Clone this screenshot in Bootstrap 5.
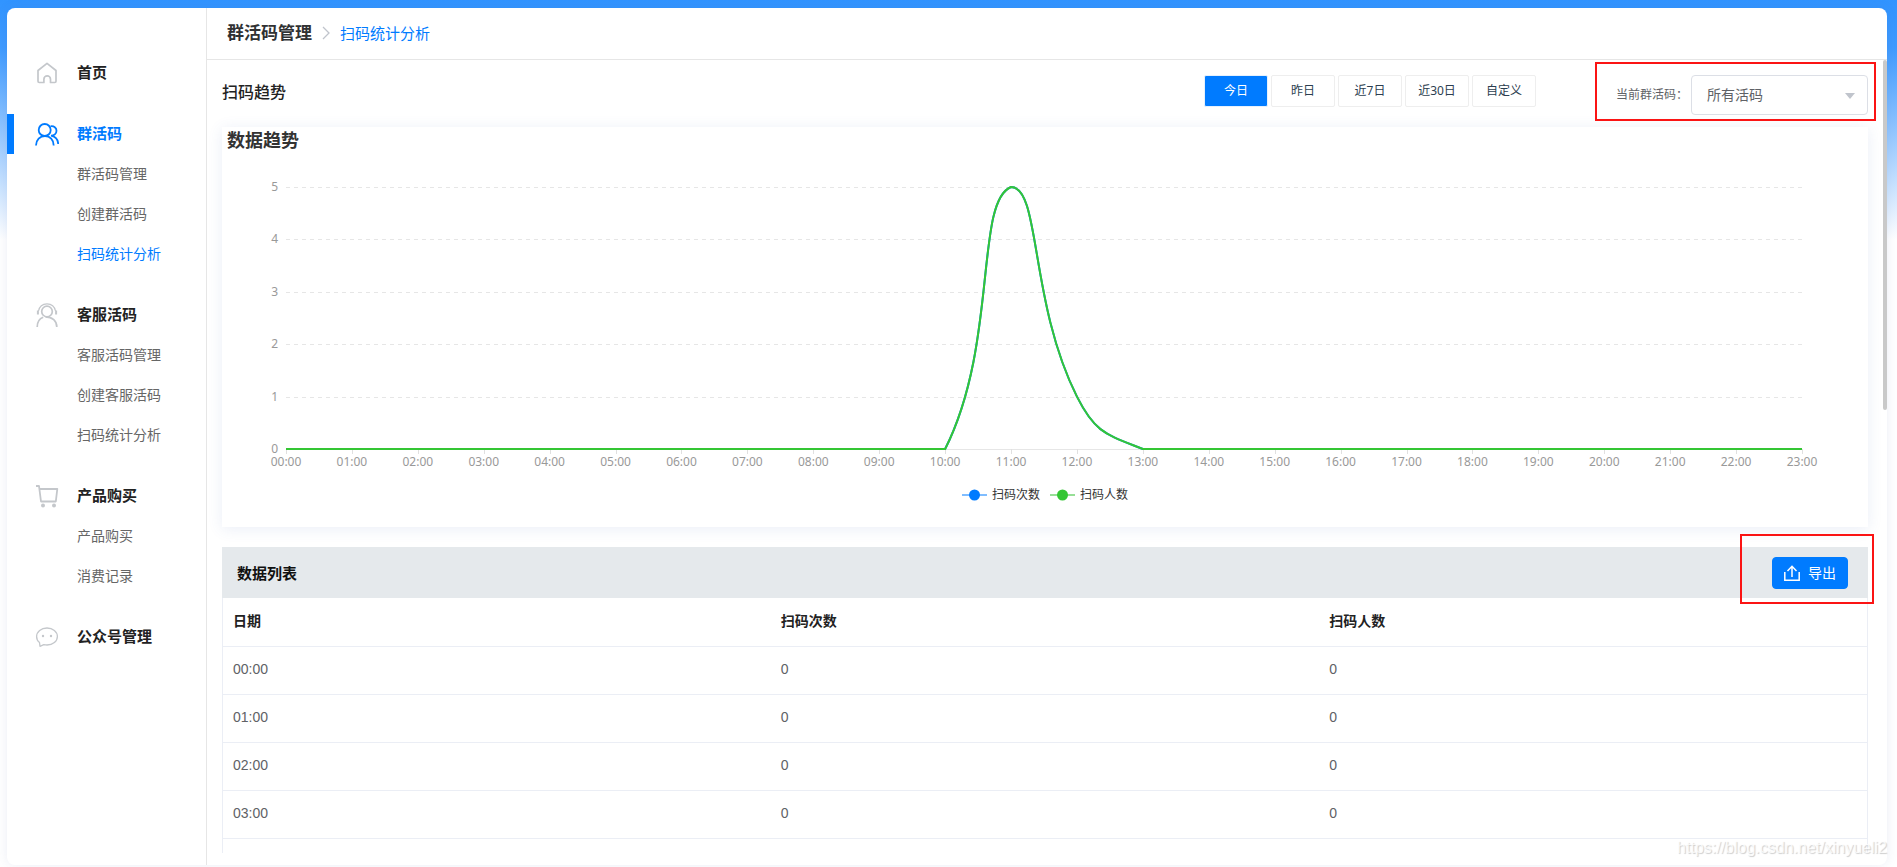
<!DOCTYPE html>
<html lang="zh-CN">
<head>
<meta charset="utf-8">
<meta name="viewport" content="width=device-width, initial-scale=1">
<title>扫码统计分析</title>
<link href="https://cdn.jsdelivr.net/npm/bootstrap@5.3.0/dist/css/bootstrap.min.css" rel="stylesheet">
<style>
  :root { --brand: #007bff; --line: #e6e6e6; --row-line: #ebeef5; }
  body {
    font-family: "Noto Sans", "Noto Sans CJK SC", sans-serif;
    font-size: 14px; line-height: 20px; color: #303133;
    background: linear-gradient(#3194ff 0, #3f9bff 48px, #fff 240px) no-repeat, #fff;
    background-size: 100% 240px;
    padding: 8px 10px 2px 7px;
  }
  a { text-decoration: none; }
  .shell { border-radius: 8px; box-shadow: 0 0 12px rgba(60, 80, 160, .1); }
  /* sidebar */
  .side { width: 200px; border-right: 1px solid var(--line); padding-top: 45px; }
  .side-group { margin-bottom: 21px; }
  .side-head { height: 40px; padding-left: 21px; border-left: 7px solid transparent; font-size: 15px; font-weight: 700; color: #222; }
  .side-head svg { width: 24px; height: 24px; margin-right: 18px; color: #c4c7cb; }
  .side-head span { padding-bottom: 2px; }
  .side-head.active { border-left-color: var(--brand); color: var(--brand); }
  .side-head.active svg { color: var(--brand); }
  .side-sub { height: 40px; padding-left: 70px; color: #666; }
  .side-sub.active { color: var(--brand); }
  /* top bar */
  .topbar { height: 52px; padding: 0 0 2px 20px; border-bottom: 1px solid var(--line); }
  .crumb-root { font-size: 17px; font-weight: 700; color: #303133; }
  .crumb-here { font-size: 15px; color: var(--brand); }
  /* scroll region */
  .scroller { overflow-y: auto; scrollbar-width: none; padding: 0 19px 0 15px; }
  .scroller::-webkit-scrollbar { display: none; }
  .thumb { position: absolute; right: 0; top: 0; width: 4px; border-radius: 2px; background: #c9c9c9; }
  .tools { padding-top: 15px; height: 67px; }
  .tools-title { font-size: 16px; line-height: 34px; font-weight: 500; color: #222; }
  .range { gap: 3px; margin-right: 80px; }
  .range .btn {
    --bs-btn-color: #2c3e50; --bs-btn-border-color: #eee; --bs-btn-bg: #fff;
    --bs-btn-active-bg: var(--brand); --bs-btn-active-color: #fff; --bs-btn-active-border-color: #e6f1fd;
    width: 64px; height: 32px; padding: 0; font-size: 12px; border-radius: 2px;
  }
  .picker label { font-size: 12px; color: #606266; width: 75px; }
  .picker select {
    width: 177px; height: 40px; padding: 0 15px; font-size: 14px; color: #606266; appearance: none;
    border-radius: 4px; border: 1px solid #dcdfe6; background: #fff;
  }
  .picker .arrow { position: absolute; right: 13px; top: 18px; pointer-events: none; border: 5px solid transparent; border-top: 6px solid #c0c4cc; border-bottom: 0; }
  .callout { position: absolute; border: 2px solid #fb1414; pointer-events: none; }
  .callout-picker { inset: -13px -8px -6px -21px; }
  .callout-export { inset: -23px -26px -15px -32px; }
  .trend { height: 400px; box-shadow: 0 2px 14px rgba(60, 100, 180, .11); margin-bottom: 20px; }
  .trend h2 { font-size: 18px; line-height: 26px; font-weight: 700; color: #333; margin: 0; padding-left: 5px; }
  .plot { height: 334px; }
  .plot svg text { font-size: 12px; fill: #999; }
  .legend-row { gap: 10px; font-size: 12px; line-height: 16px; color: #333; }
  .key { width: 25px; height: 12px; margin-right: 5px; }
  .list-bar { height: 51px; padding: 0 20px 0 15px; background: #e5e9ec; font-size: 15px; font-weight: 700; color: #111; }
  .btn-export { --bs-btn-bg: var(--brand); --bs-btn-border-color: var(--brand); --bs-btn-color: #fff; width: 76px; height: 32px; padding: 0; font-size: 14px; border-radius: 4px; gap: 8px; }
  .records { table-layout: fixed; border: 1px solid var(--row-line); border-top: 0; color: #606266; margin-bottom: 60px; }
  .records > :not(caption) > * > * { height: 48px; padding: 0 10px 2px; vertical-align: middle; border-bottom: 1px solid var(--row-line); color: inherit; }
  .records th { color: #222; }
  .records td { font-family: "Liberation Sans", "Noto Sans CJK SC", sans-serif; }
  .watermark { position: absolute; right: 0; bottom: 5px; font-family: "Liberation Sans", sans-serif; font-size: 16px; line-height: 24px; color: rgba(255, 255, 255, .8); text-shadow: 1px 1px 1px rgba(0, 0, 0, .2); pointer-events: none; }
</style>
</head>
<body class="vh-100 overflow-hidden">
<div class="shell d-flex h-100 bg-white position-relative">
  <nav class="side flex-shrink-0">
    <div class="side-group">
      <a href="#" class="side-head d-flex align-items-center">
        <svg viewBox="0 0 24 24" fill="none" stroke="currentColor" stroke-width="1.700" stroke-linejoin="round"><path d="M3 9.500 12 2.300l9 7.200v10.800q0 1.200-1.200 1.200h-4.300v-3.300a3.300 3.300 0 0 0-6.600 0v3.300H4.200Q3 21.500 3 20.300z"/></svg><span>首页</span></a>
    </div>
    <div class="side-group">
      <a href="#" class="side-head active d-flex align-items-center">
        <svg viewBox="0 0 24 24" fill="none" stroke="currentColor" stroke-width="1.800"><circle cx="9.700" cy="8" r="6"/><path d="M1 23.500c0-5.500 4-9.500 9-9.500s8.700 4 8.700 9.500M15.500 4.300c3.500-.6 6 1.600 6 4.500 0 3-2.500 5-5.500 4.900 4 .8 7 4 7.200 8.300"/></svg><span>群活码</span></a>
      <a href="#" class="side-sub d-flex align-items-center">群活码管理</a>
      <a href="#" class="side-sub d-flex align-items-center">创建群活码</a>
      <a href="#" class="side-sub active d-flex align-items-center">扫码统计分析</a>
    </div>
    <div class="side-group">
      <a href="#" class="side-head d-flex align-items-center">
        <svg viewBox="0 0 24 24" fill="none" stroke="currentColor" stroke-width="1.700"><circle cx="12" cy="8.500" r="5.300"/><path d="M2.200 24c0-4.500 2.300-8.300 6-9.700M10.500 13.800c7 0 11.300 4 11.300 10.200"/><path d="M3.500 8C4.500 3 7.800.8 12 .8S19.500 3 20.500 8" stroke-width="1.200"/><path d="M2.900 7.500v4M21.100 7.500v4" stroke-width="2"/></svg><span>客服活码</span></a>
      <a href="#" class="side-sub d-flex align-items-center">客服活码管理</a>
      <a href="#" class="side-sub d-flex align-items-center">创建客服活码</a>
      <a href="#" class="side-sub d-flex align-items-center">扫码统计分析</a>
    </div>
    <div class="side-group">
      <a href="#" class="side-head d-flex align-items-center">
        <svg viewBox="0 0 24 24" fill="none" stroke="currentColor" stroke-width="1.800" stroke-linejoin="round"><path d="M1 2h3l2 15.500h14.800L22.300 5H4.500"/><circle cx="8" cy="21.500" r="2" fill="currentColor" stroke="none"/><circle cx="19" cy="21.500" r="2" fill="currentColor" stroke="none"/></svg><span>产品购买</span></a>
      <a href="#" class="side-sub d-flex align-items-center">产品购买</a>
      <a href="#" class="side-sub d-flex align-items-center">消费记录</a>
    </div>
    <div class="side-group">
      <a href="#" class="side-head d-flex align-items-center">
        <svg viewBox="0 0 24 24" fill="none" stroke="currentColor" stroke-width="1.300" stroke-linejoin="round"><path d="M4.500 17.500C2.500 16 1.600 13.700 1.600 11.500 1.600 6.700 6.200 3 12 3s10.400 3.700 10.400 8.500S17.800 20 12 20c-1.200 0-2.200-.2-3.200-.4L5 21.300z"/><circle cx="8" cy="11" r="1.200" fill="currentColor" stroke="none"/><circle cx="16" cy="11" r="1.200" fill="currentColor" stroke="none"/></svg><span>公众号管理</span></a>
    </div>
  </nav>

  <main class="flex-grow-1 d-flex flex-column" style="min-width:0">
    <header class="topbar d-flex align-items-center flex-shrink-0">
      <span class="crumb-root">群活码管理</span>
      <svg class="mx-2" width="12" height="14" viewBox="0 0 12 14" fill="none" stroke="#c0c4cc" stroke-width="1.300"><path d="M3 1l6 6-6 6"/></svg>
      <a href="#" class="crumb-here">扫码统计分析</a>
    </header>

    <div class="position-relative flex-grow-1 overflow-hidden mb-2 pb-1">
      <div class="scroller h-100" id="scroller">
        <div class="tools d-flex align-items-start">
          <div class="tools-title me-auto">扫码趋势</div>
          <div class="range d-flex">
            <button type="button" class="btn active">今日</button>
            <button type="button" class="btn">昨日</button>
            <button type="button" class="btn">近7日</button>
            <button type="button" class="btn">近30日</button>
            <button type="button" class="btn">自定义</button>
          </div>
          <div class="picker d-flex align-items-center position-relative">
            <label for="code">当前群活码：</label>
            <div class="position-relative">
              <select id="code" class="d-block"><option>所有活码</option></select>
              <span class="arrow"></span>
            </div>
            <span class="callout callout-picker"></span>
          </div>
        </div>

        <section class="trend bg-white">
          <h2>数据趋势</h2>
          <div class="plot" id="plot"></div>
          <div class="legend-row d-flex justify-content-center">
            <span class="d-flex align-items-center"><svg class="key" viewBox="0 0 25 12"><path d="M0 6h25" stroke="#80bdff" stroke-width="2"/><circle cx="12.500" cy="6" r="5.500" fill="#007bff"/></svg>扫码次数</span>
            <span class="d-flex align-items-center"><svg class="key" viewBox="0 0 25 12"><path d="M0 6h25" stroke="#97df97" stroke-width="2"/><circle cx="12.500" cy="6" r="5.500" fill="#34c634"/></svg>扫码人数</span>
          </div>
        </section>

        <section>
          <div class="list-bar d-flex align-items-center justify-content-between">
            <span>数据列表</span>
            <div class="position-relative">
              <button type="button" class="btn btn-export d-flex align-items-center justify-content-center">
                <svg width="16" height="16" viewBox="0 0 16 16" fill="none" stroke="#fff" stroke-width="1.500"><path d="M.8 7v8.200h14.400V7M8 12V1.500M3.500 6 8 1.300 12.500 6"/></svg>导出</button>
              <span class="callout callout-export"></span>
            </div>
          </div>
          <table class="table records">
            <thead><tr><th>日期</th><th>扫码次数</th><th>扫码人数</th></tr></thead>
            <tbody id="rows"></tbody>
          </table>
        </section>
      </div>
      <div class="thumb" id="thumb"></div>
    </div>
  </main>
  <span class="watermark">https://blog.csdn.net/xinyueli2</span>
</div>

<script src="https://cdn.jsdelivr.net/npm/bootstrap@5.3.0/dist/js/bootstrap.bundle.min.js"></script>
<script>
  const hours = Array.from({ length: 24 }, (_, h) => String(h).padStart(2, '0') + ':00');
  const counts = hours.map((_, h) => ({ 11: 5, 12: 1 })[h] || 0);
  const scroller = document.getElementById('scroller'), thumb = document.getElementById('thumb');
  const rows = document.getElementById('rows');
  rows.innerHTML = hours.map(() => '<tr><td></td><td></td><td></td></tr>').join('');

  // Rows are filled in once they have scrolled fully into view.
  function fillRows() {
    const limit = scroller.getBoundingClientRect().bottom;
    [...rows.rows].forEach((tr, h) => {
      if (tr.cells[0].textContent || tr.getBoundingClientRect().bottom > limit) return;
      [hours[h], counts[h], counts[h]].forEach((v, i) => { tr.cells[i].textContent = v; });
    });
  }

  // Smooth line: tangents follow the neighbours, handles stay inside the plot.
  function smoothPath(p, top, bottom) {
    const clamp = y => Math.min(bottom, Math.max(top, y));
    const dist = (a, b) => Math.hypot(a[0] - b[0], a[1] - b[1]);
    const handles = p.map((q, i) => {
      const a = p[i - 1] || q, b = p[i + 1] || q;
      const vx = (b[0] - a[0]) / 2, vy = (b[1] - a[1]) / 2;
      const r = dist(q, b) / (dist(q, b) + dist(a, q));
      return [[q[0] - vx * (1 - r), clamp(q[1] - vy * (1 - r))], [q[0] + vx * r, clamp(q[1] + vy * r)]];
    });
    return 'M' + p[0] + p.slice(1).map((q, i) => `C${handles[i][1]} ${handles[i + 1][0]} ${q}`).join('');
  }

  function drawPlot() {
    const box = document.getElementById('plot'), w = box.clientWidth, height = 330;
    const left = 64, right = w - 66, top = 34, bottom = 296;
    const x = h => left + (right - left) * h / 23, y = v => bottom - (bottom - top) * v / 5;
    let s = '';
    for (let v = 0; v <= 5; v++) {
      const ly = Math.round(y(v)) + 0.5;
      s += `<path d="M${left} ${ly}H${right}" stroke="#e6e6e6"${v ? ' stroke-dasharray="4 4"' : ''}/>`;
      s += `<text x="${left - 8}" y="${ly + 3}" text-anchor="end">${v}</text>`;
    }
    hours.forEach((t, h) => {
      s += `<path d="M${Math.round(x(h)) + 0.5} ${bottom}v5" stroke="#e0e0e0"/>`;
      s += `<text x="${x(h)}" y="${bottom + 17}" text-anchor="middle">${t}</text>`;
    });
    const d = smoothPath(counts.map((v, h) => [x(h), y(v)]), top, bottom);
    s += `<path d="${d}" fill="none" stroke="#007bff" stroke-width="2"/><path d="${d}" fill="none" stroke="#34c634" stroke-width="2"/>`;
    box.innerHTML = `<svg class="d-block" width="${w}" height="${height}">${s}</svg>`;
  }

  function syncScroll() {
    const k = scroller.clientHeight / scroller.scrollHeight;
    thumb.style.height = Math.round(scroller.clientHeight * k) + 'px';
    thumb.style.top = Math.round(scroller.scrollTop * k) + 'px';
    fillRows();
  }
  scroller.addEventListener('scroll', syncScroll);
  addEventListener('resize', () => { drawPlot(); syncScroll(); });
  drawPlot(); syncScroll();
</script>
</body>
</html>
